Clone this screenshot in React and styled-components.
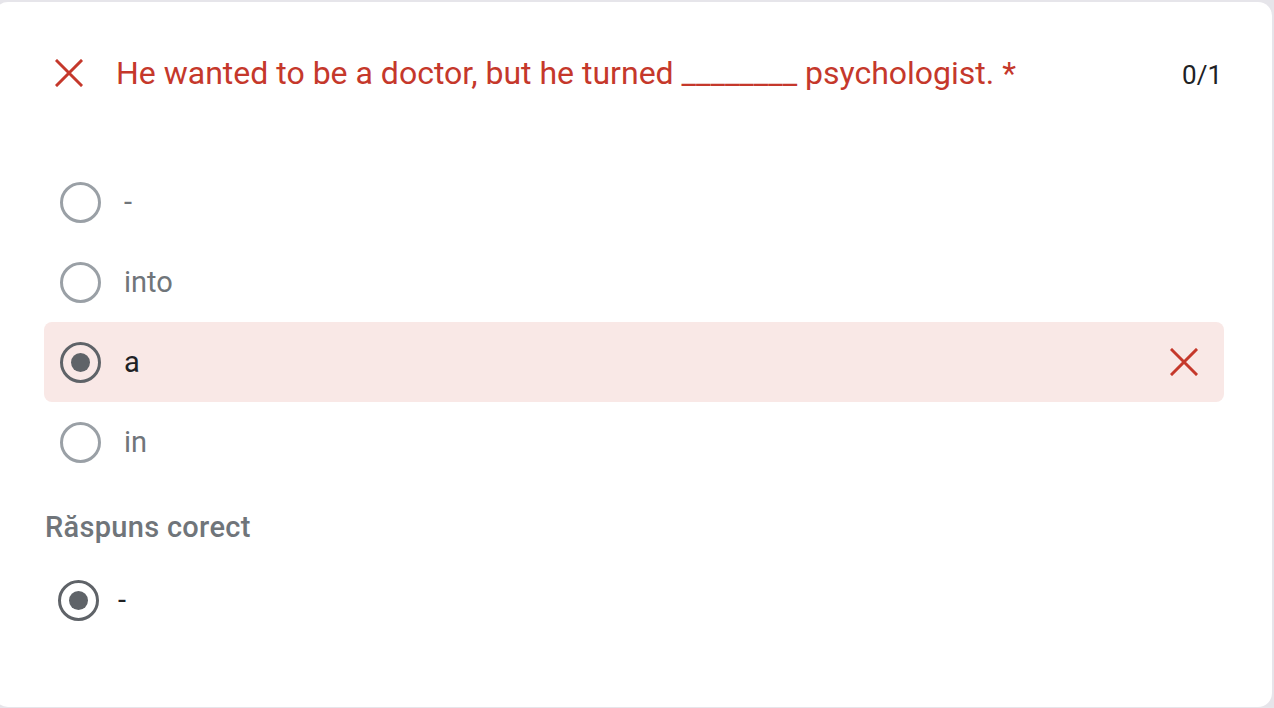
import React from "react";
import styled, { createGlobalStyle } from "styled-components";

const Global = createGlobalStyle`
  html, body { margin: 0; padding: 0; background: #e6e5ea; }
  body { font-family: Roboto, "Liberation Sans", sans-serif; overflow: hidden; }
  #root { width: 1274px; height: 708px; overflow: hidden; }
`;

const Page = styled.div`
  width: 1274px;
  height: 708px;
  padding-top: 2px;
  box-sizing: border-box;
  overflow: hidden;
`;

const Card = styled.div`
  margin-left: -6px;
  width: 1278px;
  height: 705px;
  background: #ffffff;
  border-radius: 14px;
  box-sizing: border-box;
  padding: 40px 48px 0 50px;
`;

const Header = styled.div`
  display: flex;
  align-items: center;
  height: 62px;
  padding-left: 11px;
  padding-right: 2px;
`;

const Title = styled.div`
  flex: 1;
  margin-left: 33px;
  color: #c5382b;
  font-size: 32px;
`;

const Score = styled.div`
  color: #202124;
  font-size: 26px;
  padding-top: 3px;
`;

const Options = styled.div`
  display: flex;
  flex-direction: column;
  margin-top: 58px;
`;

const Row = styled.div`
  display: flex;
  align-items: center;
  height: 80px;
  padding-left: 16px;
  padding-right: 26px;
  border-radius: 8px;
  background: ${(p) => (p.$wrong ? "#f9e8e6" : "transparent")};
`;

const Radio = styled.span`
  width: 41px;
  height: 41px;
  box-sizing: border-box;
  border-radius: 50%;
  border: 3px solid ${(p) => (p.$checked ? "#5f6368" : "#9aa0a6")};
  display: flex;
  align-items: center;
  justify-content: center;
  flex-shrink: 0;
  &::after {
    content: "";
    display: ${(p) => (p.$checked ? "block" : "none")};
    width: 19px;
    height: 19px;
    border-radius: 50%;
    background: #5f6368;
  }
`;

const Label = styled.span`
  flex: 1;
  margin-left: 23px;
  font-size: 29px;
  color: ${(p) => (p.$selected ? "#202124" : "#70757a")};
`;

const SectionTitle = styled.div`
  margin-top: 28px;
  font-size: 29px;
  font-weight: 500;
  letter-spacing: 0.3px;
  color: #70757a;
  margin-left: 1px;
`;

const CorrectRow = styled.div`
  display: flex;
  align-items: center;
  height: 80px;
  margin-top: 16px;
  padding-left: 14px;
`;

const CorrectLabel = styled.span`
  margin-left: 19px;
  font-size: 29px;
  color: #202124;
`;

const Cross = ({ size = 28 }) => (
  <svg width={size} height={size} viewBox="0 0 28 28" fill="none">
    <path d="M2 2 L26 26 M26 2 L2 26" stroke="#c5382b" strokeWidth="3" strokeLinecap="square" />
  </svg>
);

const options = [
  { text: "-" },
  { text: "into" },
  { text: "a", selected: true, wrong: true },
  { text: "in" },
];

export default function App() {
  return (
    <Page>
      <Global />
      <Card>
        <Header>
          <Cross />
          <Title>He wanted to be a doctor, but he turned ________ psychologist. *</Title>
          <Score>0/1</Score>
        </Header>
        <Options>
          {options.map((o) => (
            <Row key={o.text} $wrong={o.wrong}>
              <Radio $checked={o.selected} />
              <Label $selected={o.selected}>{o.text}</Label>
              {o.wrong && <Cross />}
            </Row>
          ))}
        </Options>
        <SectionTitle>Răspuns corect</SectionTitle>
        <CorrectRow>
          <Radio $checked />
          <CorrectLabel>-</CorrectLabel>
        </CorrectRow>
      </Card>
    </Page>
  );
}
